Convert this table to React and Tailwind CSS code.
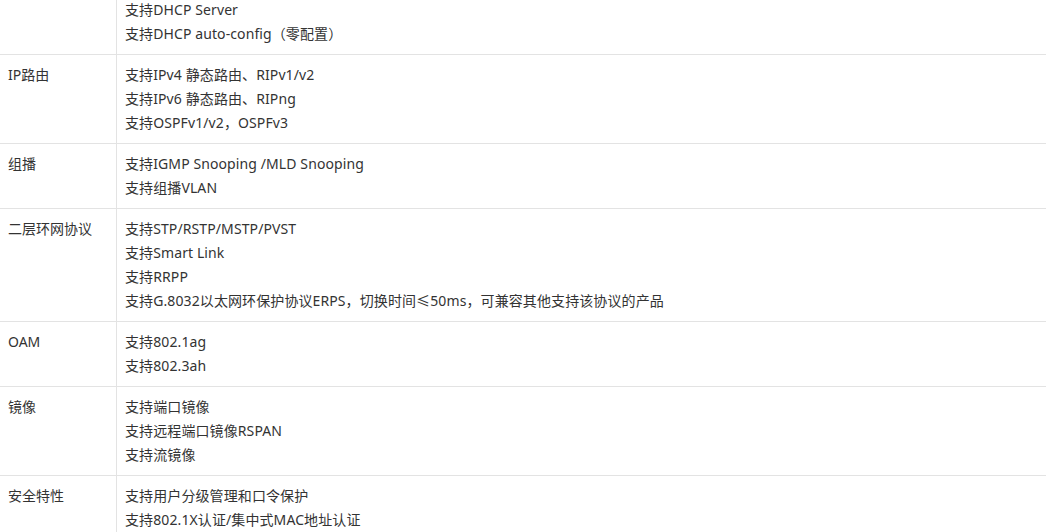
const rows = [
  { label: "", items: ["支持DHCP Server", "支持DHCP auto-config（零配置）"], first: true },
  { label: "IP路由", items: ["支持IPv4 静态路由、RIPv1/v2", "支持IPv6 静态路由、RIPng", "支持OSPFv1/v2，OSPFv3"] },
  { label: "组播", items: ["支持IGMP Snooping /MLD Snooping", "支持组播VLAN"] },
  {
    label: "二层环网协议",
    items: [
      "支持STP/RSTP/MSTP/PVST",
      "支持Smart Link",
      "支持RRPP",
      "支持G.8032以太网环保护协议ERPS，切换时间≤50ms，可兼容其他支持该协议的产品",
    ],
  },
  { label: "OAM", items: ["支持802.1ag", "支持802.3ah"] },
  { label: "镜像", items: ["支持端口镜像", "支持远程端口镜像RSPAN", "支持流镜像"] },
  { label: "安全特性", items: ["支持用户分级管理和口令保护", "支持802.1X认证/集中式MAC地址认证"] },
];

export default function App() {
  return (
    <div
      className="h-[532px] overflow-hidden bg-white text-[14px] leading-[24px] text-[#333]"
      style={{ fontFamily: '"Noto Sans", "Noto Sans CJK SC", sans-serif' }}
    >
      <div className="-mt-[2px] w-[1046px]">
        {rows.map((row, i) => (
          <div key={i} className={`flex ${i > 0 ? "border-t border-[#e3e3e3]" : ""}`}>
            <div className={`w-[117px] shrink-0 border-r border-[#e3e3e3] px-2 ${row.first ? "pb-2" : "py-2"}`}>
              {row.label}
            </div>
            <div className={`flex-1 px-2 tracking-[0.1px] ${row.first ? "pb-2" : "py-2"}`}>
              {row.items.map((t, j) => (
                <div key={j}>{t}</div>
              ))}
            </div>
          </div>
        ))}
      </div>
    </div>
  );
}
